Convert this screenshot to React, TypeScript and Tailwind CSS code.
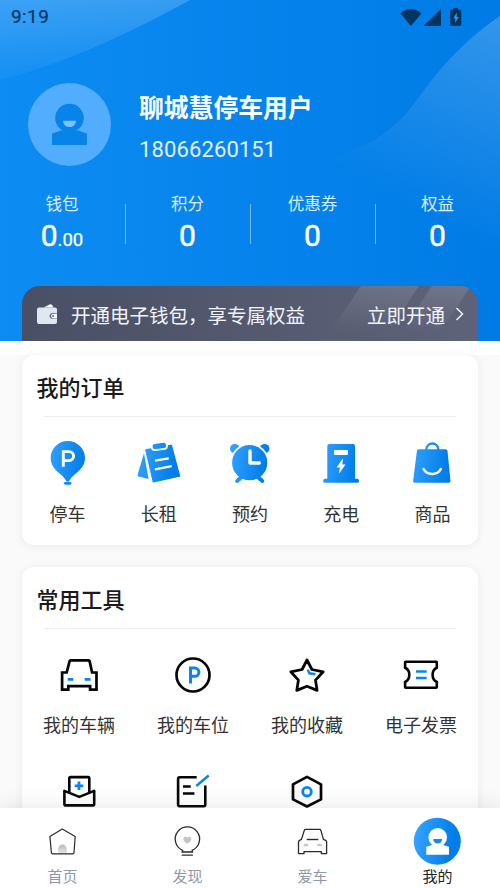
import type { ReactNode } from "react";

const Gradient = ({ id }: { id: string }) => (
  <defs>
    <linearGradient id={id} x1="0" y1="0" x2="48" y2="8" gradientUnits="userSpaceOnUse">
      <stop offset="0.1" stopColor="#35a2ff" />
      <stop offset="0.9" stopColor="#007de8" />
    </linearGradient>
  </defs>
);

const Icon = ({ children }: { children: ReactNode }) => (
  <svg className="block h-12 w-12" viewBox="0 0 48 48" fill="none">
    {children}
  </svg>
);

const ParkingIcon = () => (
  <Icon>
    <Gradient id="g-park" />
    <path
      d="M23.7 2C14.2 2 6.7 9.6 6.7 19c0 7 4 11.500 8.500 15.200 3.500 2.900 6 5.300 7.300 8.300h2.400c1.300-3 3.800-5.400 7.300-8.300C36.700 30.500 41 26 41 19 41 9.600 33.200 2 23.700 2z"
      fill="url(#g-park)"
    />
    <ellipse cx="23.700" cy="44.300" rx="4" ry="1.500" fill="url(#g-park)" />
    <path d="M19.300 27.700V12.600h5.800a4.500 4.500 0 0 1 0 9h-5.800" stroke="#fff" strokeWidth="2.900" />
  </Icon>
);

const RentIcon = () => (
  <Icon>
    <Gradient id="g-rent" />
    <path d="M9 14.300L2.600 35.600q-.6 1.600 1 2l9.900 2.500z" fill="url(#g-rent)" />
    <path
      d="M11.200 9.600L35.600 5.200q1.600-.3 2 1.300l8 29.800q.4 1.700-1.300 2L19.200 43.900q-1.900.3-2.200-1.500L9.800 11.600q-.3-1.700 1.400-2z"
      fill="url(#g-rent)"
      stroke="#fff"
      strokeWidth="1"
    />
    <rect
      x="16.700"
      y="3.500"
      width="15.200"
      height="7"
      rx="3"
      transform="rotate(-7 24.300 7)"
      fill="url(#g-rent)"
      stroke="#fff"
      strokeWidth="1.800"
    />
    <path d="M20 21.700L33.700 19.300M19.900 30.300L36.700 27.200" stroke="#fff" strokeWidth="2.300" />
  </Icon>
);

const ClockIcon = () => (
  <Icon>
    <Gradient id="g-clock" />
    <circle cx="8.800" cy="9.700" r="4.800" fill="url(#g-clock)" />
    <circle cx="38.600" cy="9.700" r="4.800" fill="url(#g-clock)" />
    <path d="M11.200 42l4-4.500M36.200 42l-4-4.500" stroke="url(#g-clock)" strokeWidth="4" strokeLinecap="round" />
    <circle cx="23.700" cy="23.700" r="18.500" fill="url(#g-clock)" stroke="#fff" strokeWidth="1.800" />
    <path d="M12.500 40.800l3-3M34.900 40.800l-3-3" stroke="url(#g-clock)" strokeWidth="4" />
    <path d="M24 12v12h9.300" stroke="#fff" strokeWidth="3.400" strokeLinecap="round" strokeLinejoin="round" />
  </Icon>
);

const ChargeIcon = () => (
  <Icon>
    <Gradient id="g-charge" />
    <rect x="10.300" y="5" width="27.700" height="38" rx="2" fill="url(#g-charge)" />
    <rect x="6.300" y="39.700" width="35.600" height="4" rx="1.500" fill="url(#g-charge)" />
    <rect x="17" y="11" width="14" height="5" rx="1.200" fill="#fff" />
    <path d="M25.700 20L20 28.300h3.300L22.300 34 28 25.700h-3z" fill="#fff" stroke="#fff" strokeWidth="0.500" />
  </Icon>
);

const GoodsIcon = () => (
  <Icon>
    <Gradient id="g-goods" />
    <path d="M18.300 12v-1.500a6 6 0 0 1 12 0V12" stroke="url(#g-goods)" strokeWidth="2.300" />
    <path
      d="M10.600 10.300h27.200q1.600 0 1.700 1.600l3 30q.2 1.800-1.600 1.800H6.700q-1.800 0-1.600-1.800l3.800-30q.2-1.600 1.700-1.600z"
      fill="url(#g-goods)"
    />
    <path d="M15.500 30c3.500 6.500 14 6.500 17.300 0" stroke="#fff" strokeWidth="2.500" strokeLinecap="round" />
  </Icon>
);

const CarIcon = () => (
  <Icon>
    <path
      d="M15.600 9.300h18q.8 0 1 .8l2.500 11.400h4.400v17.200h-6.400v-3.500H13.300v3.500H7.100V21.500h4.600l2.900-11.400q.2-.8 1-.8z"
      stroke="#050505"
      strokeWidth="2.700"
    />
    <path d="M12.700 28.400h5.600M29.700 28.400h5.800" stroke="#0a84f0" strokeWidth="2.800" />
  </Icon>
);

const SpotIcon = () => (
  <Icon>
    <circle cx="24" cy="24" r="16.500" stroke="#050505" strokeWidth="2.700" />
    <path d="M21.500 32.400V17.100h4.300a4.100 4.100 0 0 1 0 8.200h-4.300" stroke="#0a84f0" strokeWidth="3" />
  </Icon>
);

const StarIcon = () => (
  <Icon>
    <path
      d="M24 9l4.900 9.500 11.300 2.300-7.700 8.300 1.600 10.300L24 35.200l-10.200 4.200 1.600-10.300-7.600-8.300 11.300-2.300z"
      stroke="#050505"
      strokeWidth="2.800"
      strokeLinejoin="round"
    />
    <path d="M24.800 18.800l1.600 3.500 6 1" stroke="#0a84f0" strokeWidth="2.400" />
  </Icon>
);

const TicketIcon = () => (
  <Icon>
    <path
      d="M8.800 10.800h30.300q.7 0 .7.700v5.200c-5.600 2.500-5.600 11.500 0 14.300v5.100q0 .7-.7.700H8.800q-.7 0-.7-.7V31c5.600-2.800 5.600-11.800 0-14.300v-5.200q0-.7.700-.7z"
      stroke="#050505"
      strokeWidth="2.600"
    />
    <path d="M19 20.500h10.700M19 27h10.700" stroke="#0a84f0" strokeWidth="2.600" />
  </Icon>
);

const MailIcon = () => (
  <Icon>
    <path d="M14.300 24V10.300q0-1.200 1.200-1.200h17.600q1.200 0 1.200 1.200V24" stroke="#050505" strokeWidth="2.600" />
    <path
      d="M9.400 22.900l14.900 6 14.900-6v13q0 1.500-1.500 1.500H10.900q-1.500 0-1.500-1.500z"
      stroke="#050505"
      strokeWidth="2.600"
      strokeLinejoin="round"
    />
    <path d="M24 13.500v8.600M19.700 17.800h8.600" stroke="#0a84f0" strokeWidth="2.800" />
  </Icon>
);

const NoteIcon = () => (
  <Icon>
    <path
      d="M27.700 9.200H10.800q-1.700 0-1.700 1.700v25.700q0 1.700 1.700 1.700h23.800q1.700 0 1.700-1.700V17.600"
      stroke="#050505"
      strokeWidth="2.600"
    />
    <path d="M14 18.500h7.700M14 25.500h11.400" stroke="#050505" strokeWidth="2.500" />
    <path d="M27.300 18L39.700 7.500" stroke="#0a84f0" strokeWidth="2.500" />
  </Icon>
);

const HexIcon = () => (
  <Icon>
    <path d="M24 8.900l14 7.500v15L24 38.500l-14-7.100v-15z" stroke="#050505" strokeWidth="2.700" strokeLinejoin="round" />
    <circle cx="24" cy="23.700" r="4.300" stroke="#0a84f0" strokeWidth="2.800" />
  </Icon>
);

const HomeTabIcon = () => (
  <Icon>
    <defs>
      <linearGradient id="g-door" x1="0" y1="27" x2="0" y2="37" gradientUnits="userSpaceOnUse">
        <stop stopColor="#b5b5b5" />
        <stop offset="1" stopColor="#ececec" />
      </linearGradient>
    </defs>
    <path d="M20 36.500V32a4.400 4.400 0 0 1 8.800 0v4.500z" fill="url(#g-door)" />
    <path
      d="M24.300 12L37.200 19.500 36 35.800q-.1 1-1 1H14.500q-1 0-1.100-1L11.900 19.500z"
      stroke="#2a2a2a"
      strokeWidth="1.200"
      strokeLinejoin="round"
    />
  </Icon>
);

const BulbTabIcon = () => (
  <Icon>
    <path
      d="M24.300 26.800c-2.500-1.800-4-3-4-4.800 0-2.500 3-3 4-1 1-2 4-1.500 4 1 0 1.800-1.500 3-4 4.800z"
      fill="#c4c4c4"
    />
    <path d="M19.600 34.800v-1.500a12.200 12.200 0 1 1 9.600 0v1.500M18.500 35h11.700M18.700 38.200h11.200" stroke="#2a2a2a" strokeWidth="1.300" />
  </Icon>
);

const CarTabIcon = () => (
  <Icon>
    <path
      d="M17.600 12.400h14q1 0 1.300 1l2.500 9 2.200 1q1 .5 1 1.600v11.600h-5.300v-2H16v2h-5.500V25q0-1.100 1-1.600l2-1 2.800-9q.3-1 1.300-1z"
      stroke="#2a2a2a"
      strokeWidth="1.300"
      strokeLinejoin="round"
    />
    <path d="M18.700 22.500h11.600" stroke="#2a2a2a" strokeWidth="1.400" />
    <path d="M15.700 28h4.400M29.300 28h4.400" stroke="#c8c8c8" strokeWidth="2.400" />
  </Icon>
);

const MineTabIcon = () => (
  <Icon>
    <Gradient id="g-mine" />
    <circle cx="24.300" cy="24.200" r="23.500" fill="url(#g-mine)" />
    <circle cx="24.700" cy="20.400" r="9.300" fill="#fff" />
    <path d="M13.300 37.700v-8l6-1.700h10.700l6 1.700v8z" fill="#fff" />
    <path d="M20.200 22.100h8.900a4.450 4.300 0 0 1-8.900 0z" fill="#1389f2" />
  </Icon>
);

const stats = [
  { label: "钱包", value: "0", decimals: ".00" },
  { label: "积分", value: "0" },
  { label: "优惠券", value: "0" },
  { label: "权益", value: "0" },
];

const orders = [
  { label: "停车", icon: <ParkingIcon /> },
  { label: "长租", icon: <RentIcon /> },
  { label: "预约", icon: <ClockIcon /> },
  { label: "充电", icon: <ChargeIcon /> },
  { label: "商品", icon: <GoodsIcon /> },
];

const tools = [
  { label: "我的车辆", icon: <CarIcon /> },
  { label: "我的车位", icon: <SpotIcon /> },
  { label: "我的收藏", icon: <StarIcon /> },
  { label: "电子发票", icon: <TicketIcon /> },
];

const moreTools = [
  { id: "mail", icon: <MailIcon /> },
  { id: "note", icon: <NoteIcon /> },
  { id: "settings", icon: <HexIcon /> },
];

const tabs = [
  { label: "首页", icon: <HomeTabIcon /> },
  { label: "发现", icon: <BulbTabIcon /> },
  { label: "爱车", icon: <CarTabIcon /> },
  { label: "我的", icon: <MineTabIcon />, active: true },
];

const HeaderWaves = () => (
  <svg className="absolute inset-0 h-full w-full" viewBox="0 0 500 341" fill="none">
    <defs>
      <linearGradient id="wave-left" x1="0" y1="0" x2="0" y2="80" gradientUnits="userSpaceOnUse">
        <stop stopColor="#fff" stopOpacity="0.190" />
        <stop offset="1" stopColor="#fff" stopOpacity="0.030" />
      </linearGradient>
      <linearGradient id="wave-right" x1="500" y1="20" x2="405" y2="205" gradientUnits="userSpaceOnUse">
        <stop stopColor="#fff" stopOpacity="0.200" />
        <stop offset="1" stopColor="#fff" stopOpacity="0" />
      </linearGradient>
    </defs>
    <path d="M0 0h190C135 30 70 62 0 80z" fill="url(#wave-left)" />
    <path d="M500 16c-35 24-58 49-84 85-25 36-66 57-126 66v100h210z" fill="url(#wave-right)" />
  </svg>
);

const StatusBar = () => (
  <div className="flex h-[34px] items-center justify-between pl-[11px] pr-[38px] text-[#03355f]">
    <span className="text-[19px] leading-[34px] tracking-[0.4px] [-webkit-text-stroke:0.2px_#03355f]">9:19</span>
    <svg className="block h-[18px] w-[62px]" viewBox="0 0 62 18" fill="currentColor">
      <path d="M0.500 5.500C6.500-.6 15.500-.6 21.400 5.500L10.900 18z" />
      <path d="M41 1v17H23.500z" />
      <path d="M53.500 0h4.500v1.800h2q1.300 0 1.300 1.300v13.400q0 1.300-1.300 1.300h-8.500q-1.300 0-1.300-1.300V3.100q0-1.300 1.300-1.300h2z" />
      <path d="M56.800 4.500l-3.600 6h2v4.500l3.600-6h-2z" fill="#2a95ee" />
    </svg>
  </div>
);

const Card = ({ title, children }: { title: string; children: ReactNode }) => (
  <section className="rounded-[12px] bg-white shadow-[0_1px_10px_rgba(0,0,0,0.07)]">
    <h2 className="px-[14.5px] pt-[18px] text-[22px] font-medium leading-8 text-[#1a1a1a]">{title}</h2>
    <div className="mx-[22px] mt-[11px] border-t border-[#eeeeee]" />
    {children}
  </section>
);

export default function App() {
  return (
    <div className="flex h-[888px] w-[500px] flex-col overflow-hidden bg-[#fafafa] font-['Roboto','Noto_Sans_CJK_SC',sans-serif]">
      <header className="relative h-[341px] shrink-0 bg-linear-to-r from-[#0d8cf3] to-[#007be5]">
        <HeaderWaves />
        <div className="relative flex h-full flex-col">
          <StatusBar />

          <div className="mt-[49px] flex h-[83px] items-start pl-7">
            <svg className="block h-[83px] w-[83px]" viewBox="0 0 83 83">
              <circle cx="41.500" cy="41.500" r="41.500" fill="#52adff" />
              <circle cx="41.500" cy="35" r="14.300" fill="#0783e9" />
              <path d="M24 62V50.500l9-3h17l9 3V62z" fill="#0783e9" />
              <path d="M35 37.800h13a6.500 6.300 0 0 1-13 0z" fill="#7cc4ff" />
            </svg>
            <div className="ml-7 pt-2 text-white">
              <div className="text-[24.800px] font-bold leading-9">聊城慧停车用户</div>
              <div className="mt-[7px] text-[22px] leading-8 tracking-[0.12px] text-[#e4efff]">18066260151</div>
            </div>
          </div>

          <div className="mt-[27px] grid grid-cols-4">
            {stats.map((stat, i) => (
              <div key={stat.label} className="flex items-start">
                <div className={i > 0 ? "mt-[11px] h-10 w-px bg-white/45" : "h-10 w-0"} />
                <div className="flex-1 pr-px text-center">
                  <div className="h-6 text-[16.500px] leading-6 text-[#dfecff]">{stat.label}</div>
                  <div className="mt-px h-9 text-[30px] leading-9 text-white [-webkit-text-stroke:0.5px_#fff]">
                    {stat.value}
                    {stat.decimals && (
                      <span className="text-[18.500px] [-webkit-text-stroke:0.25px_#fff]">{stat.decimals}</span>
                    )}
                  </div>
                </div>
              </div>
            ))}
          </div>

          <div className="relative mx-[22px] mt-auto flex h-[55px] items-center overflow-hidden rounded-t-[18px] bg-linear-to-r from-[#494f64] to-[#5f6379] pl-[14px] pr-3 text-[19.500px] text-[#f4f5fa]">
            <svg className="absolute inset-0 h-full w-full" viewBox="0 0 456 55">
              <defs>
                <linearGradient id="shine" x1="0" y1="0" x2="0" y2="46" gradientUnits="userSpaceOnUse">
                  <stop stopColor="#fff" stopOpacity="0.120" />
                  <stop offset="1" stopColor="#fff" stopOpacity="0" />
                </linearGradient>
              </defs>
              <path d="M339 0h58l-37 55h-58zM410 0h39l-37 55h-39z" fill="url(#shine)" />
            </svg>
            <svg className="relative block h-[22px] w-[22px]" viewBox="0 0 22 22">
              <path d="M7.500 4.500l6-3q1.700-.8 2.700.7l1.300 2.300z" fill="#f4f7fc" />
              <path
                d="M3 4.500h16q2 0 2 2v3.800h-4.500a2.600 2.600 0 0 0 0 5.200H21v3.500q0 2-2 2H3q-2 0-2-2V6.500q0-2 2-2z"
                fill="#dfe7f3"
              />
              <path d="M15 13a2.300 2.300 0 0 1 2.300-2.300H21v4.600h-3.700A2.300 2.300 0 0 1 15 13z" fill="#f4f7fc" />
              <path d="M19 10.300h-2.500a2.600 2.600 0 0 0 0 5.200" fill="none" stroke="#7a8196" strokeWidth="0.800" />
              <circle cx="17" cy="13" r="0.900" fill="#555b70" />
            </svg>
            <span className="relative ml-[13px] pt-[7px] leading-8">开通电子钱包，享专属权益</span>
            <span className="relative ml-auto pt-[7px] leading-8">立即开通</span>
            <svg className="relative ml-[9px] block h-4 w-3" viewBox="0 0 12 16" fill="none">
              <path d="M2.500 2L8.500 8l-6 6" stroke="#f4f5fa" strokeWidth="1.500" />
            </svg>
          </div>
        </div>
      </header>

      <main className="min-h-0 flex-1 overflow-hidden">
        <div className="h-[14px] bg-white" />
        <div className="flex flex-col gap-[22px] px-[22px]">
          <Card title="我的订单">
            <div className="grid h-[128px] grid-cols-5 pt-[22px]">
              {orders.map((item) => (
                <div key={item.label} className="flex flex-col items-center">
                  {item.icon}
                  <span className="mt-[14px] text-[18px] leading-7 text-[#333333]">{item.label}</span>
                </div>
              ))}
            </div>
          </Card>

          <Card title="常用工具">
            <div className="grid h-[110px] grid-cols-4 pt-[22px]">
              {tools.map((item) => (
                <div key={item.label} className="flex flex-col items-center">
                  {item.icon}
                  <span className="mt-[13px] text-[18px] leading-7 text-[#333333]">{item.label}</span>
                </div>
              ))}
            </div>
            <div className="grid h-[100px] grid-cols-4 pt-[29px]">
              {moreTools.map((item) => (
                <div key={item.id} className="flex flex-col items-center">
                  {item.icon}
                </div>
              ))}
            </div>
          </Card>
        </div>
      </main>

      <nav className="relative grid h-20 shrink-0 grid-cols-4 bg-white pt-[9px] shadow-[0_-2px_18px_rgba(60,80,110,0.13)]">
        {tabs.map((tab) => (
          <div key={tab.label} className="flex flex-col items-center">
            <div className="pr-px">{tab.icon}</div>
            <span className={tab.active ? "pt-px text-[15px] leading-[22px] text-[#222222]" : "pt-px text-[15px] leading-[22px] text-[#9097a6]"}>
              {tab.label}
            </span>
          </div>
        ))}
      </nav>
    </div>
  );
}
